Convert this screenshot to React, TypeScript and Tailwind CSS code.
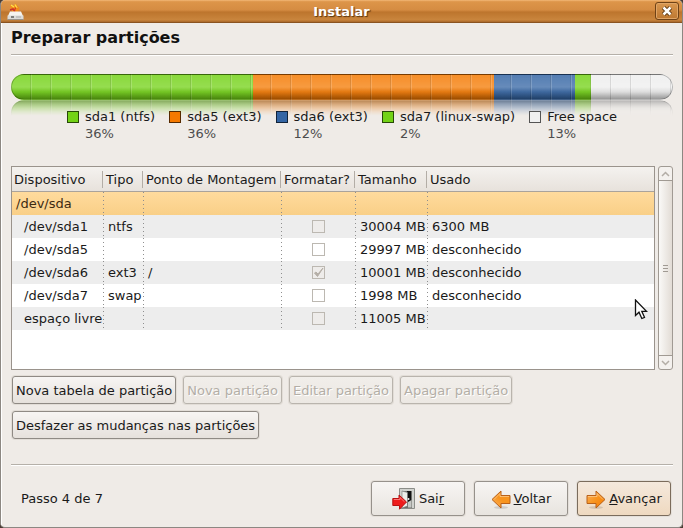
import type { ReactNode } from "react";

type Segment = { name: string; share: string; size: number; fill: string; swatch: string };

const segments: Segment[] = [
  { name: "sda1 (ntfs)", share: "36%", size: 242, fill: "bg-[#73d216]", swatch: "bg-[#73d216]" },
  { name: "sda5 (ext3)", share: "36%", size: 241, fill: "bg-[#f57900]", swatch: "bg-[#f57900]" },
  { name: "sda6 (ext3)", share: "12%", size: 81, fill: "bg-[#3465a4]", swatch: "bg-[#3465a4]" },
  { name: "sda7 (linux-swap)", share: "2%", size: 16, fill: "bg-[#73d216]", swatch: "bg-[#73d216]" },
  { name: "Free space", share: "13%", size: 82, fill: "bg-[#eeeeee]", swatch: "bg-[#f0f0f0]" },
];

type Row = { device: string; type: string; mount: string; format: boolean; size: string; used: string };

const rows: Row[] = [
  { device: "/dev/sda1", type: "ntfs", mount: "", format: false, size: "30004 MB", used: "6300 MB" },
  { device: "/dev/sda5", type: "", mount: "", format: false, size: "29997 MB", used: "desconhecido" },
  { device: "/dev/sda6", type: "ext3", mount: "/", format: true, size: "10001 MB", used: "desconhecido" },
  { device: "/dev/sda7", type: "swap", mount: "", format: false, size: "1998 MB", used: "desconhecido" },
  { device: "espaço livre", type: "", mount: "", format: false, size: "11005 MB", used: "" },
];

const columns = ["Dispositivo", "Tipo", "Ponto de Montagem", "Formatar?", "Tamanho", "Usado"];

const dotted =
  "bg-[repeating-linear-gradient(to_bottom,#8f8f8f_0px,#8f8f8f_1px,transparent_1px,transparent_4px)] bg-[length:1px_100%] bg-right bg-no-repeat";

function DiskBar() {
  return (
    <div className="grid h-[26px] overflow-hidden rounded-full">
      <div className="col-start-1 row-start-1 flex">
        {segments.map((s) => (
          <div key={s.name} className={s.fill} style={{ flexGrow: s.size, flexBasis: 0 }} />
        ))}
      </div>
      <div className="col-start-1 row-start-1 bg-[repeating-linear-gradient(to_right,rgba(255,255,255,0.18)_0px,rgba(255,255,255,0.18)_1px,transparent_1px,transparent_19px,rgba(0,0,0,0.14)_19px,rgba(0,0,0,0.14)_20px)]" />
      <div className="col-start-1 row-start-1 rounded-full border border-black/25 bg-[linear-gradient(to_bottom,rgba(255,255,255,0.16)_0%,rgba(255,255,255,0.25)_50%,rgba(128,128,128,0.14)_70%,rgba(0,0,0,0.36)_100%)]" />
    </div>
  );
}

function Rule() {
  return <hr className="border-t border-b border-t-[#b5b0a9] border-b-white" />;
}

function SmallButton({ children, disabled }: { children: ReactNode; disabled?: boolean }) {
  return (
    <button
      disabled={disabled}
      className="h-7 whitespace-nowrap rounded-[3px] border border-[#8f8a84] bg-linear-to-b from-[#f7f5f3] to-[#e6e1dc] px-[3px] shadow-[0_0_0_1px_#e2ddd7] disabled:border-[#b9b4ad] disabled:from-[#f1eeea] disabled:to-[#ece8e3] disabled:text-[#b3aea6] disabled:text-shadow-[1px_1px_0_#ffffff]"
    >
      {children}
    </button>
  );
}

function NavButton({ icon, children, primary }: { icon: ReactNode; children: ReactNode; primary?: boolean }) {
  const tone = primary
    ? "border-[#7b6c5c] from-[#f5e9dc] to-[#efd9c0]"
    : "border-[#96918b] from-[#f7f5f3] to-[#e8e4df]";
  return (
    <button
      className={`flex h-[35px] w-[94px] items-center justify-center gap-[3px] rounded-[3px] border bg-linear-to-b shadow-[0_0_0_1px_#e4dfd9] ${tone}`}
    >
      {icon}
      <span>{children}</span>
    </button>
  );
}

function Arrow({ left }: { left?: boolean }) {
  return (
    <svg width="20" height="20" viewBox="0 0 20 20" className={left ? "-scale-x-100" : ""} aria-hidden="true">
      <defs>
        <linearGradient id={left ? "arrowBack" : "arrowNext"} x1="0" y1="0" x2="1" y2="1">
          <stop offset="0" stopColor={left ? "#f8941e" : "#fcb260"} />
          <stop offset="0.5" stopColor="#f8941e" />
          <stop offset="1" stopColor={left ? "#fcb260" : "#f57900"} />
        </linearGradient>
      </defs>
      <ellipse cx="10" cy="18.500" rx="7" ry="1.500" fill="#000" opacity="0.12" />
      <path
        d="M1 6.500H10V2L19 10.500L10 19V14.500H1Z"
        fill={left ? "url(#arrowBack)" : "url(#arrowNext)"}
        stroke="#b8611a"
        strokeLinejoin="round"
      />
      <path d="M2 7.500H11V4.500L17 10.500" fill="none" stroke="#fdd5a4" opacity="0.6" />
    </svg>
  );
}

function ExitIcon() {
  return (
    <svg width="24" height="22" viewBox="0 0 24 22" aria-hidden="true">
      <path d="M7.500 0.500H22.500V20.500H7.500Z" fill="#d0d2ce" stroke="#8b8d88" />
      <path d="M10 3H20V20H10Z" fill="#6c6e6a" />
      <path d="M15 3H19V15L15 18Z" fill="#111" />
      <path d="M10 3L15.500 4.500V18L10 20Z" fill="#eceeea" stroke="#777" strokeWidth="0.600" />
      <path d="M16 14L19.500 12V19.500H16Z" fill="#c6c8c4" />
      <circle cx="16.500" cy="11" r="1" fill="#f4f4f4" />
      <path
        d="M0.800 10.500H7V7L14.500 14L7.500 21.200V17.500H0.800Z"
        fill="#ee1c1c"
        stroke="#b81010"
        strokeLinejoin="round"
      />
      <path d="M1.800 11.500H8V9.500L12.500 13.800" fill="none" stroke="#ff8b8b" strokeWidth="0.800" />
    </svg>
  );
}

function InstallerIcon() {
  return (
    <svg width="17" height="17" viewBox="0 0 17 17" aria-hidden="true">
      <path d="M3 1.500L6 3L8.500 0.500L11 3.500L12.500 5L11 9H5.500L3.500 6Z" fill="#f08a1c" />
      <path d="M4 2L7 4M8 1.500L10 5" stroke="#fce14a" strokeWidth="1.400" />
      <path d="M3 7L6 6L8 8.500" fill="none" stroke="#c9342b" strokeWidth="1.600" />
      <path d="M9 4.500L7.500 7" stroke="#d43c22" strokeWidth="1.300" />
      <path d="M3 8.500H14L16 13H1Z" fill="#f5f4f1" />
      <path d="M0.500 12.500H16.500V16.500H0.500Z" fill="#dcdcd9" />
      <path d="M0.500 16.500H16.500" stroke="#9a948b" />
      <path d="M4 14H7" stroke="#222" strokeWidth="1.200" />
      <path d="M9 14H14" stroke="#aaa" />
    </svg>
  );
}

function Chevron({ down }: { down?: boolean }) {
  return (
    <svg width="9" height="6" viewBox="0 0 9 6" className={down ? "rotate-180" : ""} aria-hidden="true">
      <path d="M1 5L4.500 1.500L8 5" fill="none" stroke="#b3ada6" strokeWidth="1.500" />
    </svg>
  );
}

function FormatBox({ checked, label, shaded }: { checked: boolean; label: string; shaded: boolean }) {
  return (
    <span className="mx-auto grid size-[13px]">
      <input
        type="checkbox"
        defaultChecked={checked}
        disabled
        aria-label={label}
        className={`col-start-1 row-start-1 size-[13px] appearance-none border border-[#bcb8b1] ${shaded ? "bg-[#eeecea]" : "bg-white"}`}
      />
      {checked && (
        <svg viewBox="0 0 13 13" className="col-start-1 row-start-1 size-[13px]" aria-hidden="true">
          <path d="M2.500 7L5.500 10.500L11 2L6 8L4 6Z" fill="#b5afa7" stroke="#b5afa7" />
        </svg>
      )}
    </span>
  );
}

function PartitionTable() {
  return (
    <table className="w-full table-fixed border-collapse text-left">
      <colgroup>
        <col className="w-[92px]" />
        <col className="w-10" />
        <col className="w-[138px]" />
        <col className="w-[74px]" />
        <col className="w-[72px]" />
        <col />
      </colgroup>
      <thead>
        <tr className="h-[25px] bg-linear-to-b from-[#f4f2ef] to-[#e7e1db] shadow-[inset_0_-1px_0_#aaa39b]">
          {columns.map((c) => (
            <th key={c} className="group p-0 font-normal whitespace-nowrap">
              <div className="mr-px border-r border-[#b3ada6] pl-0.5 leading-[17px] group-last:border-transparent">{c}</div>
            </th>
          ))}
        </tr>
      </thead>
      <tbody>
        <tr className="h-[23px] bg-linear-to-b from-[#ffdb9d] to-[#f9cf87] text-[#3c2a12]">
          <td className={`py-0 pr-0 pl-1 ${dotted}`}>/dev/sda</td>
          <td className={dotted} />
          <td className={dotted} />
          <td className={dotted} />
          <td className={dotted} />
          <td />
        </tr>
        {rows.map((r, i) => (
          <tr key={r.device} className="h-[23px] whitespace-nowrap odd:bg-white even:bg-[#ededed]">
            <td className={`py-0 pr-0 pl-3 ${dotted}`}>{r.device}</td>
            <td className={`py-0 pr-0 pl-1 ${dotted}`}>{r.type}</td>
            <td className={`py-0 pr-0 pl-1 ${dotted}`}>{r.mount}</td>
            <td className={`py-0 pr-0.5 pl-0 ${dotted}`}>
              <FormatBox checked={r.format} shaded={i % 2 === 0} label={`Formatar ${r.device}`} />
            </td>
            <td className={`py-0 pr-0 pl-1 ${dotted}`}>{r.size}</td>
            <td className="py-0 pr-0 pl-1">{r.used}</td>
          </tr>
        ))}
      </tbody>
    </table>
  );
}

function ScrollBar() {
  return (
    <div className="flex w-[15px] shrink-0 flex-col overflow-hidden rounded-[3px] border border-[#a09a93] bg-[#f4f1ee]">
      <button aria-label="Rolar para cima" className="flex h-[14px] items-center justify-center border-b border-[#a09a93]">
        <Chevron />
      </button>
      <div className="flex grow flex-col items-center justify-center gap-0.5 bg-linear-to-r from-[#faf9f7] to-[#e2dcd5]">
        <i className="h-px w-[5px] bg-[#a09a93]" />
        <i className="h-px w-[5px] bg-[#a09a93]" />
        <i className="h-px w-[5px] bg-[#a09a93]" />
      </div>
      <button aria-label="Rolar para baixo" className="flex h-[14px] items-center justify-center border-t border-[#a09a93]">
        <Chevron down />
      </button>
    </div>
  );
}

export default function App() {
  return (
    <div className="relative min-h-screen bg-[#4a3c34] font-['DejaVu_Sans',sans-serif] text-[13px] leading-[17px] text-[#1a1a1a]">
      <div className="flex min-h-screen flex-col overflow-hidden rounded-[5px] border-x border-b border-[#8c8782] bg-[#efebe7]">
        <header className="flex h-[23px] items-center border-b border-[#8a5320] bg-[linear-gradient(to_bottom,#f3b878_0%,#dd9549_8%,#d58c42_45%,#bd752d_55%,#c9853d_90%,#a9672a_100%)] pr-[3px] pl-1.5">
          <InstallerIcon />
          <h1 className="grow pl-1 text-center font-bold text-white text-shadow-[1px_1px_1px_#5a3510]">Instalar</h1>
          <button
            aria-label="Fechar"
            className="flex h-[18px] w-6 items-center justify-center rounded-[3px] border border-[#6f4216] bg-linear-to-b from-[#d9974f] to-[#bd7831] shadow-[inset_0_0_0_1px_#e0a566]"
          >
            <svg width="12" height="12" viewBox="0 0 12 12" aria-hidden="true">
              <path d="M2.500 2.500L9.500 9.500M9.500 2.500L2.500 9.500" stroke="#5c3711" strokeWidth="4.500" />
              <path d="M2.500 2.500L9.500 9.500M9.500 2.500L2.500 9.500" stroke="#fff" strokeWidth="2.500" />
            </svg>
          </button>
        </header>

        <main className="flex grow flex-col border-l border-white pr-[9px] pb-[11px] pl-[9px]">
          <h2 className="pt-1 pb-[5px] text-[16px] leading-[22px] font-bold text-[#111]">Preparar partições</h2>
          <Rule />

          <div className="relative mt-[18px]">
            <DiskBar />
            <div
              className="absolute inset-x-0 top-full h-[26px] -scale-y-100 opacity-65 [mask-image:linear-gradient(to_top,#000_0%,transparent_60%)]"
              aria-hidden="true"
            >
              <DiskBar />
            </div>
          </div>

          <ul className="relative mt-2 flex justify-center gap-3.5">
            {segments.map((s) => (
              <li key={s.name} className="grid grid-cols-[12px_auto] items-center gap-x-1.5">
                <span className={`size-3 border border-black/65 ${s.swatch}`} />
                <span>{s.name}</span>
                <span className="col-start-2 text-[#4d4d4d]">{s.share}</span>
              </li>
            ))}
          </ul>

          <div className="mt-6 flex min-h-[204px] grow gap-[3px]">
            <div className="grow border border-[#9a938c] bg-white">
              <PartitionTable />
            </div>
            <ScrollBar />
          </div>

          <div className="mt-1.5 flex flex-wrap gap-x-[7px] gap-y-[7px] pl-px">
            <SmallButton>Nova tabela de partição</SmallButton>
            <SmallButton disabled>Nova partição</SmallButton>
            <SmallButton disabled>Editar partição</SmallButton>
            <SmallButton disabled>Apagar partição</SmallButton>
          </div>
          <div className="mt-[7px] mb-[25px] flex pl-px">
            <SmallButton>Desfazer as mudanças nas partições</SmallButton>
          </div>

          <Rule />

          <footer className="mt-[15px] flex items-center gap-[9px] pr-0.5 pl-2.5">
            <p className="grow">Passo 4 de 7</p>
            <NavButton icon={<ExitIcon />}>
              Sai<u>r</u>
            </NavButton>
            <NavButton icon={<Arrow left />}>
              <u>V</u>oltar
            </NavButton>
            <NavButton icon={<Arrow />} primary>
              <u>A</u>vançar
            </NavButton>
          </footer>
        </main>
      </div>

      <svg className="absolute top-[299px] left-[634px]" width="14" height="21" viewBox="0 0 14 21" aria-hidden="true">
        <path
          d="M1.500 1V16.500L5 13.200L7.800 19.500L10.500 18.300L7.800 12.300H12.500Z"
          fill="#fff"
          stroke="#111"
          strokeWidth="1.300"
        />
      </svg>
    </div>
  );
}
